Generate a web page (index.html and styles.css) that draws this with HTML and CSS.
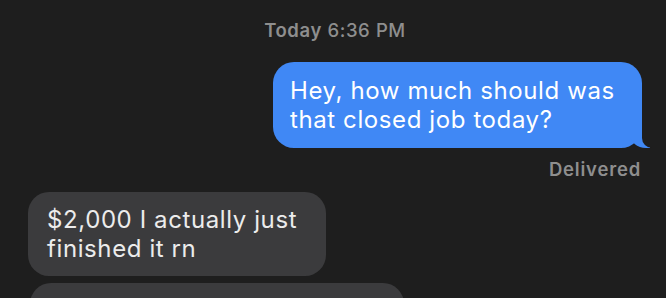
FILE: index.html
```html
<!DOCTYPE html>
<html>
    <head>
        <meta charset="utf-8">
        <link rel="stylesheet" href="styles.css">
    </head>
    <body>
        <div class="thread">
            <div class="stamp"><b>Today</b> 6:36 PM</div>
            <div class="row row--me">
                <div class="bubble bubble--me">Hey, how much should was<br>that closed job today?</div>
            </div>
            <div class="status">Delivered</div>
            <div class="row row--them">
                <div class="bubble bubble--them">$2,000 I actually just<br>finished it rn</div>
            </div>
            <div class="row row--them">
                <div class="bubble bubble--them bubble--next">&nbsp;<br>&nbsp;</div>
            </div>
        </div>
    </body>
</html>
```

FILE: styles.css
```css
html, body {
	margin: 0;
	height: 100%;
	background: #1e1e1e;
	overflow: hidden;
}

.thread {
	display: flex;
	flex-direction: column;
	padding: 19px 24px 0 28px;
	font-family: Inter, 'Liberation Sans', sans-serif;
	-webkit-font-smoothing: antialiased;
}

.stamp {
	text-align: center;
	font-size: 18.5px;
	color: #8e8e8e;
	font-weight: 500;
	line-height: 22px;
	letter-spacing: 0.6px;
	padding-left: 0;
}
.stamp b {
	font-weight: 600;
}

.row {
	display: flex;
}
.row--me {
	justify-content: flex-end;
	margin-top: 21px;
}
.row--them {
	justify-content: flex-start;
}

.bubble {
	position: relative;
	font-size: 24px;
	line-height: 29px;
	padding: 14px 17px 14px 17px;
	border-radius: 21px;
	color: #fff;
	letter-spacing: 0.6px;
	white-space: nowrap;
}
.bubble--me {
	background: #4088f5;
	width: 335px;
}
.bubble--me::before {
	content: "";
	position: absolute;
	right: -8px;
	bottom: 0;
	width: 20px;
	height: 22px;
	background: #4088f5;
	border-bottom-left-radius: 16px 14px;
}
.bubble--me::after {
	content: "";
	position: absolute;
	right: -12px;
	bottom: 0;
	width: 12px;
	height: 22px;
	background: #1e1e1e;
	border-bottom-left-radius: 10px;
}

.status {
	text-align: right;
	font-size: 18.5px;
	font-weight: 600;
	color: #8e8e8e;
	line-height: 20px;
	letter-spacing: 0.8px;
	margin-top: 11px;
	padding-right: 1px;
}

.bubble--them {
	background: #3b3b3d;
	color: #ececec;
	width: 262px;
	margin-top: 13px;
	padding-left: 19px;
	padding-top: 13px;
	padding-bottom: 13px;
}
.bubble--next {
	width: 338px;
	margin-top: 7px;
	margin-left: 2px;
}
```
